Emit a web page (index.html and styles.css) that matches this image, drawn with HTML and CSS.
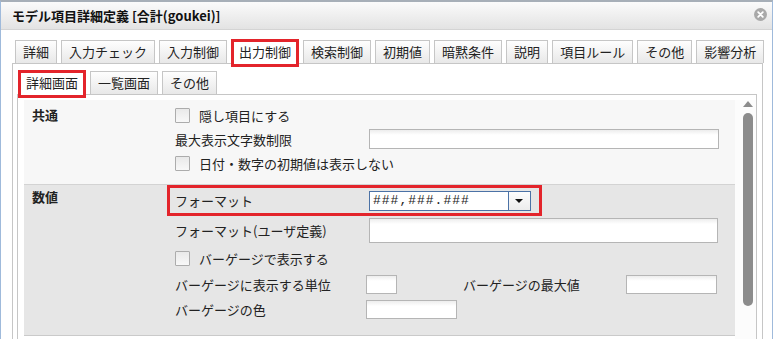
FILE: index.html
```html
<!doctype html>
<html lang="ja">
<head>
    <meta charset="UTF-8">
    <meta name="viewport" content="width=device-width, initial-scale=1.0">
    <title>モデル項目詳細定義</title>
    <link rel="stylesheet" href="styles.css">
</head>
<body>
    <div class="dialog">
        <div class="titlebar">
            <span class="title">モデル項目詳細定義 [合計(goukei)]</span>
            <svg class="close" width="13" height="13" viewBox="0 0 13 13">
                <circle cx="6.5" cy="6.5" r="6.5" fill="#a9a9a9"/>
                <path d="M4.2 4.2 L8.8 8.8 M8.8 4.2 L4.2 8.8" stroke="#fff" stroke-width="1.8" stroke-linecap="round"/>
            </svg>
        </div>

        <div class="dialog-body">
            <ul class="tabs">
                <li class="tab">詳細</li>
                <li class="tab">入力チェック</li>
                <li class="tab">入力制御</li>
                <li class="tab active marked">出力制御</li>
                <li class="tab">検索制御</li>
                <li class="tab">初期値</li>
                <li class="tab">暗黙条件</li>
                <li class="tab">説明</li>
                <li class="tab">項目ルール</li>
                <li class="tab">その他</li>
                <li class="tab">影響分析</li>
            </ul>

            <div class="tab-panel">
                <ul class="tabs sub">
                    <li class="tab active marked">詳細画面</li>
                    <li class="tab">一覧画面</li>
                    <li class="tab">その他</li>
                </ul>

                <div class="sub-panel">
                    <div class="scroller">
                        <div class="sections">
                            <div class="section common">
                                <div class="section-label">共通</div>
                                <div class="rows">
                                    <label class="row"><input type="checkbox" class="check"><span>隠し項目にする</span></label>
                                    <div class="row"><span class="label">最大表示文字数制限</span><input class="text w350"></div>
                                    <label class="row"><input type="checkbox" class="check"><span>日付・数字の初期値は表示しない</span></label>
                                </div>
                            </div>

                            <div class="section number">
                                <div class="section-label">数値</div>
                                <div class="rows">
                                    <div class="format-box">
                                        <span class="label">フォーマット</span>
                                        <div class="select">
                                            <span class="select-value">###,###.###</span>
                                            <span class="select-btn"></span>
                                        </div>
                                    </div>
                                    <div class="row tall"><span class="label">フォーマット(ユーザ定義)</span><input class="text w349 h25"></div>
                                    <label class="row tall"><input type="checkbox" class="check"><span>バーゲージで表示する</span></label>
                                    <div class="row">
                                        <span class="label short">バーゲージに表示する単位</span><input class="text w31">
                                        <span class="label max">バーゲージの最大値</span><input class="text w91">
                                    </div>
                                    <div class="row color"><span class="label short">バーゲージの色</span><input class="text w91"></div>
                                </div>
                            </div>
                        </div>

                        <div class="scrollbar">
                            <span class="arrow"></span>
                            <span class="thumb"></span>
                        </div>
                    </div>
                </div>
            </div>
        </div>
    </div>
</body>
</html>
```

FILE: styles.css
```css
* {
    box-sizing: border-box;
}
body {
    margin: 0;
    background: #fff;
    font-family: "Noto Sans CJK JP", "Noto Sans", sans-serif;
    font-size: 13px;
    color: #222;
}
.dialog {
    width: 773px;
    height: 339px;
    overflow: hidden;
    background: #fff;
    border: 1px solid #9fbadb;
    border-top: 2px solid #a7afb8;
    border-bottom: none;
}
.titlebar {
    height: 28px;
    display: flex;
    align-items: center;
    justify-content: space-between;
    padding: 0 5px 0 11px;
    background: linear-gradient(#fbfbfb, #e3e3e3);
    border-bottom: 1px solid #d4d4d4;
}
.title {
    font-weight: bold;
    font-size: 13px;
    color: #111;
}
.close {
    display: block;
    margin-top: -3px;
}
.dialog-body {
    padding: 10px 9px 0 11px;
}
.tabs {
    display: flex;
    gap: 4px;
    list-style: none;
    margin: 0 0 0 3px;
    padding: 0;
    white-space: nowrap;
}
.tab {
    position: relative;
    height: 23px;
    line-height: 21px;
    padding: 0 7px;
    border: 1px solid #c6c6c6;
    border-bottom: none;
    background: linear-gradient(#fefefe, #e8e8e8);
    color: #222;
}
.tab.active {
    background: #fff;
    height: 24px;
    margin-bottom: -1px;
}
.marked::after {
    content: '';
    position: absolute;
    left: -1px;
    right: -1px;
    top: -2px;
    bottom: -3px;
    border: 3px solid #e3242b;
}
.sub {
    margin-left: 1px;
}
.tab-panel {
    border: 1px solid #c6c6c6;
    padding: 7px 5px 0 4px;
    height: 300px;
}
.sub-panel {
    border: 1px solid #c6c6c6;
    padding: 5px 0 0 6px;
    height: 260px;
}
.scroller {
    display: flex;
    height: 250px;
}
.sections {
    flex: 1;
}
.section {
    display: flex;
}
.section-label {
    width: 151px;
    padding-left: 8px;
    line-height: 24px;
    font-weight: bold;
}
.common {
    background: #f7f7f7;
    padding: 3px 0 9px;
    border-bottom: 1px solid #d3d3d3;
}
.number {
    background: #e6e6e6;
    padding-bottom: 13px;
    border-bottom: 1px solid #cacaca;
}
.rows {
    display: flex;
    flex-direction: column;
}
.row {
    height: 24px;
    display: flex;
    align-items: center;
}
.row.tall {
    height: 28px;
}
.row.color {
    height: 26px;
}
.label {
    width: 194px;
}
.label.short {
    width: 191px;
}
.label.max {
    width: 163px;
    margin-left: 66px;
}
.check {
    appearance: none;
    width: 15px;
    height: 15px;
    margin: 0 9px 0 0;
    border: 1px solid #acacac;
    border-radius: 1px;
    background: linear-gradient(#e9e9e9, #f8f8f8);
}
.text {
    height: 19px;
    margin: 0;
    padding: 0 3px;
    border: 1px solid #b5b5b5;
    background: linear-gradient(#ededed, #fff 5px);
    font: inherit;
}
.w350 { width: 350px; height: 20px; }
.w349 { width: 349px; }
.h25 { height: 25px; }
.w31 { width: 31px; }
.w91 { width: 91px; }
.format-box {
    width: 375px;
    height: 31px;
    margin-left: -8px;
    padding-left: 5px;
    display: flex;
    align-items: center;
    border: 3px solid #e3242b;
}
.select {
    width: 162px;
    height: 20px;
    display: flex;
    border: 1px solid #4b72a6;
    background: #fff;
}
.select-value {
    flex: 1;
    padding-left: 3px;
    font-family: "Liberation Mono", monospace;
    font-size: 13px;
    letter-spacing: 1px;
    line-height: 18px;
}
.select-btn {
    width: 22px;
    position: relative;
    border-left: 1px solid #4b72a6;
    background: linear-gradient(#fdfdfd, #ececec);
}
.select-btn::after {
    content: '';
    position: absolute;
    left: 6px;
    top: 7px;
    border-left: 4px solid transparent;
    border-right: 4px solid transparent;
    border-top: 4px solid #111;
}
.scrollbar {
    width: 21px;
    padding-left: 8px;
    background: #fcfcfc;
    display: flex;
    flex-direction: column;
}
.arrow {
    width: 0;
    height: 0;
    margin-top: 1px;
    border-left: 5px solid transparent;
    border-right: 5px solid transparent;
    border-bottom: 6px solid #8c8c8c;
}
.thumb {
    width: 10px;
    height: 193px;
    margin-top: 6px;
    border-radius: 5px;
    background: #8c8c8c;
}
```
